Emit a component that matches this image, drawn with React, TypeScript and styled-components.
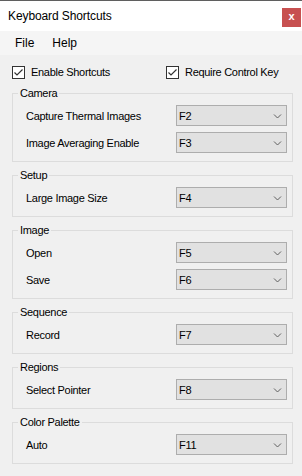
import styled, { createGlobalStyle } from "styled-components";

const GlobalStyle = createGlobalStyle`
  html, body {
    margin: 0;
    padding: 0;
    background: #f0f0f0;
  }
  body {
    font-family: "Liberation Sans", Arial, sans-serif;
    font-size: 11px;
    letter-spacing: -0.3px;
    color: #000;
  }
`;

const Window = styled.div`
  width: 302px;
  height: 476px;
  box-sizing: border-box;
  border-top: 1px solid #5f5f5f;
  background: #f0f0f0;
  display: flex;
  flex-direction: column;
  overflow: hidden;
`;

const TitleBar = styled.div`
  height: 30px;
  background: #fff;
  display: flex;
  align-items: center;
  justify-content: space-between;
  padding-left: 8px;
`;

const Title = styled.span`
  font-size: 12px;
  letter-spacing: -0.1px;
  line-height: 14px;
`;

const CloseButton = styled.div`
  align-self: flex-start;
  margin-top: 7px;
  margin-right: 1px;
  width: 19px;
  height: 19px;
  background: #c75050;
  color: #fff;
  font-weight: bold;
  font-size: 11px;
  letter-spacing: 0;
  line-height: 17px;
  text-align: center;
`;

const MenuBar = styled.div`
  height: 24px;
  background: #f5f5f5;
  display: flex;
  align-items: center;
  padding-left: 6px;
`;

const MenuItem = styled.span`
  padding: 0 9px;
  font-size: 12px;
  letter-spacing: 0;
  line-height: 14px;
`;

const Content = styled.div`
  padding: 10px 9px 0 12px;
  display: flex;
  flex-direction: column;
`;

const CheckRow = styled.div`
  display: grid;
  grid-template-columns: 154px 1fr;
  height: 13px;
  margin-bottom: 8px;
`;

const CheckItem = styled.label`
  display: flex;
  align-items: center;
  gap: 6px;
  line-height: 14px;
  white-space: nowrap;
`;

const Box = styled.span`
  width: 13px;
  height: 13px;
  box-sizing: border-box;
  border: 1px solid #333;
  background: #fff;
  display: flex;
  align-items: center;
  justify-content: center;
  flex: none;
`;

const Group = styled.fieldset`
  margin: 0 0 6px 0;
  padding: 5px 5px 8px 0;
  border: 1px solid #dcdcdc;
  display: flex;
  flex-direction: column;
  gap: 6px;
  min-width: 0;
`;

const Legend = styled.legend`
  margin-left: 5px;
  padding: 0 2px;
  line-height: 14px;
`;

const Row = styled.div`
  display: flex;
  align-items: center;
  padding-left: 13px;
  height: 21px;
`;

const Label = styled.span`
  flex: 1;
  line-height: 14px;
`;

const Combo = styled.div`
  width: 111px;
  height: 21px;
  box-sizing: border-box;
  border: 1px solid #adadad;
  background: #e1e1e1;
  display: flex;
  align-items: center;
  justify-content: space-between;
  padding: 0 4px 0 2px;
  line-height: 14px;
`;

function Check({ label }: { label: string }) {
  return (
    <CheckItem>
      <Box>
        <svg width="11" height="11" viewBox="0 0 11 11">
          <path d="M1.5 5.5 L4 8 L9.5 2.5" fill="none" stroke="#333" strokeWidth="1.2" />
        </svg>
      </Box>
      {label}
    </CheckItem>
  );
}

function Select({ value }: { value: string }) {
  return (
    <Combo>
      <span>{value}</span>
      <svg width="9" height="6" viewBox="0 0 9 6">
        <path d="M1 1.5 L4.5 5 L8 1.5" fill="none" stroke="#606060" strokeWidth="1" />
      </svg>
    </Combo>
  );
}

const groups = [
  {
    title: "Camera",
    rows: [
      ["Capture Thermal Images", "F2"],
      ["Image Averaging Enable", "F3"],
    ],
  },
  { title: "Setup", rows: [["Large Image Size", "F4"]] },
  {
    title: "Image",
    rows: [
      ["Open", "F5"],
      ["Save", "F6"],
    ],
  },
  { title: "Sequence", rows: [["Record", "F7"]] },
  { title: "Regions", rows: [["Select Pointer", "F8"]] },
  { title: "Color Palette", rows: [["Auto", "F11"]] },
];

export default function App() {
  return (
    <>
      <GlobalStyle />
      <Window>
        <TitleBar>
          <Title>Keyboard Shortcuts</Title>
          <CloseButton>x</CloseButton>
        </TitleBar>
        <MenuBar>
          <MenuItem>File</MenuItem>
          <MenuItem>Help</MenuItem>
        </MenuBar>
        <Content>
          <CheckRow>
            <Check label="Enable Shortcuts" />
            <Check label="Require Control Key" />
          </CheckRow>
          {groups.map((g) => (
            <Group key={g.title}>
              <Legend>{g.title}</Legend>
              {g.rows.map(([label, key]) => (
                <Row key={label}>
                  <Label>{label}</Label>
                  <Select value={key} />
                </Row>
              ))}
            </Group>
          ))}
        </Content>
      </Window>
    </>
  );
}
